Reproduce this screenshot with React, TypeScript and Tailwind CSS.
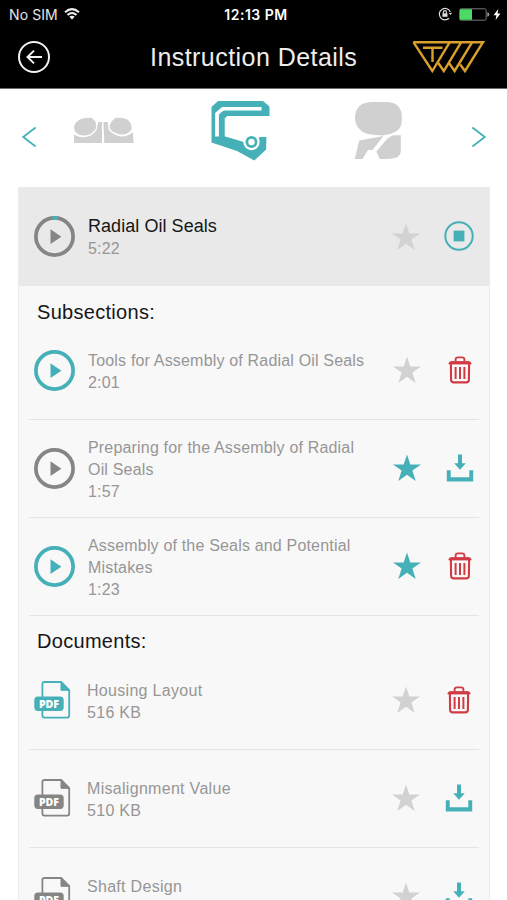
import type { ReactNode } from "react";
import clsx from "clsx";

type Action = "download" | "delete";

const SUBSECTIONS: {
  lines: string[];
  time: string;
  loaded: boolean;
  starred: boolean;
  action: Action;
}[] = [
  {
    lines: ["Tools for Assembly of Radial Oil Seals"],
    time: "2:01",
    loaded: true,
    starred: false,
    action: "delete",
  },
  {
    lines: ["Preparing for the Assembly of Radial", "Oil Seals"],
    time: "1:57",
    loaded: false,
    starred: true,
    action: "download",
  },
  {
    lines: ["Assembly of the Seals and Potential", "Mistakes"],
    time: "1:23",
    loaded: true,
    starred: true,
    action: "delete",
  },
];

const DOCUMENTS: {
  name: string;
  size?: string;
  loaded: boolean;
  action: Action;
}[] = [
  { name: "Housing Layout", size: "516 KB", loaded: true, action: "delete" },
  { name: "Misalignment Value", size: "510 KB", loaded: false, action: "download" },
  { name: "Shaft Design", loaded: false, action: "download" },
];

function Star({ active }: { active?: boolean }) {
  return (
    <svg
      width="28"
      height="28"
      viewBox="0 0 28 28"
      className={clsx("shrink-0", active ? "fill-[#46b0b8]" : "fill-[#d2d2d2]")}
    >
      <path d="M14 0.5 17.3 10.4H28L19.4 16.6 22.7 27 14 20.7 5.3 27 8.6 16.6 0 10.4H10.7Z" />
    </svg>
  );
}

function PlayButton({ loaded, progress }: { loaded?: boolean; progress?: boolean }) {
  return (
    <svg
      width="41"
      height="41"
      viewBox="0 0 41 41"
      className={clsx("shrink-0", loaded ? "text-[#46b0b8]" : "text-[#858585]")}
    >
      <circle cx="20.5" cy="20.5" r="18.6" fill="none" stroke="currentColor" strokeWidth="3.7" />
      {progress && (
        <path d="M18.4 2A18.6 18.6 0 0 1 24 2.2" fill="none" stroke="#46b0b8" strokeWidth="3.7" />
      )}
      <path d="M16.5 13.3V28L27.4 20.7Z" fill="currentColor" />
    </svg>
  );
}

function ActionIcon({ type }: { type: Action }) {
  if (type === "delete") {
    return (
      <svg width="28" height="28" viewBox="0 0 28 28" fill="none" stroke="#d13a43" className="shrink-0">
        <path d="M9.6 5.5V3.6Q9.6 1.4 12 1.4H16Q18.4 1.4 18.4 3.6V5.5" strokeWidth="1.9" />
        <path d="M2.8 8Q3 5.5 5.2 5.5H22.8Q25 5.5 25.2 8Z" fill="#d13a43" strokeWidth="0.8" />
        <path d="M4.9 8 5.1 24Q5.2 26.4 7.8 26.4H20.2Q22.8 26.4 22.9 24L23.1 8" strokeWidth="2.1" />
        <path d="M9.6 11V23M14 11V23M18.4 11V23" strokeWidth="2" />
      </svg>
    );
  }
  return (
    <svg width="28" height="28" viewBox="0 0 28 28" fill="#46b0b8" className="shrink-0">
      <path d="M12 0.5H16V9.3H19.8L14 15.8 8.2 9.3H12Z" />
      <path d="M0.8 16.3H4.7V23.3H23.3V16.3H27.2V27.4H0.8Z" />
    </svg>
  );
}

function PdfIcon({ loaded }: { loaded?: boolean }) {
  return (
    <svg
      width="37"
      height="38"
      viewBox="0 0 37 38"
      className={clsx("shrink-0", loaded ? "text-[#46b0b8]" : "text-[#858585]")}
    >
      <path
        d="M8.4 16V3Q8.4 1 10.4 1H27.2L35.2 9V34.6Q35.2 36.6 33.2 36.6H10.4Q8.4 36.6 8.4 34.6V29"
        fill="none"
        stroke="currentColor"
        strokeWidth="1.8"
      />
      <path d="M27 1V9.3H35.5Z" fill="currentColor" stroke="currentColor" />
      <rect x="0.3" y="15.5" width="29.4" height="14.4" rx="3.6" fill="currentColor" />
      <text
        x="15"
        y="26.6"
        textAnchor="middle"
        textLength="20"
        fontSize="10.6"
        fontWeight="800"
        fill="#fff"
        className="font-['Open_Sans',sans-serif]"
      >
        PDF
      </text>
    </svg>
  );
}

function Row({ children, last }: { children: ReactNode; last?: boolean }) {
  return (
    <div
      className={clsx(
        "mx-2.5 flex h-[98px] shrink-0 items-center px-[5px] pb-[2px] text-[#969696]",
        !last && "border-b-[1.5px] border-[#e4e4e4]",
      )}
    >
      {children}
    </div>
  );
}

function StatusBar() {
  return (
    <div className="flex h-7 items-center justify-between pl-[9px] pr-[6px] font-['Inter',sans-serif] text-[14px] text-[#e4e4e4]">
      <div className="flex w-[150px] items-center gap-[6px]">
        <span className="tracking-[0.1px]">No SIM</span>
        <svg width="16" height="12" viewBox="0 0 16 12" fill="none" stroke="#eee" strokeWidth="2">
          <path d="M1 4.3Q8-2 15 4.3M3.5 7Q8 2.9 12.5 7" />
          <path d="M8 11.5 5.3 8.8Q8 6.5 10.7 8.8Z" fill="#eee" stroke="none" />
        </svg>
      </div>
      <span className="text-[14px] font-semibold tracking-[0.5px] text-white">12:13 PM</span>
      <div className="flex w-[148px] items-center justify-end">
        <svg width="14" height="14" viewBox="0 0 14 14" fill="none" stroke="#ddd" strokeWidth="1.2">
          <path d="M12.3 5A5.7 5.7 0 1 0 11 11.2" />
          <path d="M10.8 6.3 12.8 8 13.9 5.7Z" fill="#ddd" stroke="none" />
          <path d="M5.4 6.5V5Q5.4 3.6 6.9 3.6 8.4 3.6 8.4 5V6.5" />
          <path d="M4.4 6.3H9.5V9.8H4.4Z" fill="#ddd" stroke="none" />
        </svg>
        <svg width="31" height="13" viewBox="0 0 31 13" className="ml-[7px]">
          <rect x="0.6" y="0.8" width="26.6" height="11.4" rx="1.6" fill="none" stroke="#777" />
          <rect x="1" y="1.2" width="12" height="10.6" fill="#4cd964" />
          <path d="M28.3 4.3Q30.3 4.5 30.3 6.5T28.3 8.7Z" fill="#999" />
        </svg>
        <svg width="8" height="11" viewBox="0 0 8 11" className="ml-[3px]">
          <path d="M5.3 0 0.5 6.2H3.4L2.6 11 7.5 4.6H4.6Z" fill="#fff" />
        </svg>
      </div>
    </div>
  );
}

function BrandLogo() {
  return (
    <svg
      width="76"
      height="34"
      viewBox="0 0 76 34"
      fill="none"
      stroke="#d9a02c"
      strokeWidth="2.4"
      className="ml-auto"
    >
      <path d="M2.4 2.2H72L54 31 49.2 24.5" />
      <path d="M2.4 2.2 21.3 31 38.8 2.2" />
      <path d="M27.3 23 32.8 31 50.2 2.2M38 23 43.6 31 61.2 2.2" />
      <path d="M12 7.8H31.5M21.5 7.8V22" />
    </svg>
  );
}

function CategoryBar() {
  return (
    <div className="flex h-[98px] shrink-0 items-start bg-white pl-[21px]">
      <svg width="16" height="22" viewBox="0 0 16 22" className="mt-[37px]" fill="none" stroke="#46b0b8" strokeWidth="1.8">
        <path d="M14.6 1.5 2.2 11 14.6 20.5" />
      </svg>
      <svg width="61" height="27" viewBox="0 0 61 27" className="ml-9 mt-[28px]" fill="#d0d0d0">
        <path d="M5.5 3.5Q8 1 13 1L18.5 0.8 22.5 4.5 23.3 9Q23.5 12 20.5 14.5 17 18.5 11 18.6 5.5 18.6 2.5 15 1 13 1 10 1.2 6.5 5.5 3.5Z" />
        <path d="M55.5 3.5Q53 1 48 1L42.5 0.8 38.5 4.5 36.5 9Q36.3 12 39.5 14.5 44 17.5 50 17.4 55.5 17 58.5 12.5 59.5 8 55.5 3.5Z" />
        <path d="M1 17.5Q5.5 20.8 12.5 20 20 19 23.7 12.5L25.2 5H29V26H1Z" />
        <path d="M30.4 5H34.8L35.5 12.5Q40 18.4 48 19.4 54.5 20 59.8 15L60.6 26H31.3Z" />
      </svg>
      <svg width="61" height="62" viewBox="0 0 61 62" className="ml-[76px] mt-[10px]">
        <path
          d="M1.5 8 8 2H53L59.5 7.5V17H18.5L15 19V37L34.5 43.3 44 34.5 50 38H56.2V50.5L44.3 61.5 27 52 1.5 43.5Z"
          fill="#46b0b8"
        />
        <path d="M7 37.5V14.8L12.8 9.9H51.5" fill="none" stroke="#fff" strokeWidth="3.8" />
        <path d="M14.5 37.3V19.5L17 17H60V38H50L43 44 35 43Z" fill="#fff" />
        <path d="M10 14.5 14 11.8H51.5V17H17L14.5 19.5V38H10Z" fill="#46b0b8" />
        <circle cx="41.5" cy="43" r="8.2" fill="#fff" />
        <path d="M50.3 38H56.2V45H49.7Z" fill="#46b0b8" />
        <circle cx="41.5" cy="43" r="4.6" fill="none" stroke="#46b0b8" strokeWidth="2.8" />
      </svg>
      <svg width="49" height="60" viewBox="0 0 49 60" className="ml-[83px] mt-[12px]" fill="#d0d0d0">
        <path d="M1 17Q1 9 6 4.5 10.5 1 18 1H32Q40 1 44 5 47.6 9 47.8 15V20Q47.5 28 41 31 36 34 29 34.4L19 33.8Q9 33 4.5 27 1 23 1 17Z" />
        <path d="M5.3 39.5 29.5 35 18.5 49H14L8.5 58H0.7Z" />
        <path d="M38.7 34.3H46.8V50Q46.5 54 42.5 56.5 38 58 25.8 58L22.3 50.5 33 38Z" />
      </svg>
      <svg width="16" height="22" viewBox="0 0 16 22" className="ml-[68px] mt-[37px]" fill="none" stroke="#46b0b8" strokeWidth="1.8">
        <path d="M1.4 1.5 13.8 11 1.4 20.5" />
      </svg>
    </div>
  );
}

export default function App() {
  return (
    <div className="flex h-[900px] w-full flex-col overflow-hidden bg-white font-['Liberation_Sans',Arial,sans-serif]">
      <header className="h-[89px] shrink-0 border-b border-[#6b6b6b] bg-black">
        <StatusBar />
        <div className="flex h-[58px] items-center pl-[17px] pr-[20px]">
          <svg width="34" height="34" viewBox="0 0 34 34" fill="none" stroke="#f2f2f2" strokeWidth="2">
            <circle cx="17" cy="17" r="15" />
            <path d="M25 17H10.5M17 10.6 10.5 17 17 23.4" />
          </svg>
          <h1 className="ml-[99px] whitespace-nowrap pt-0.5 text-[25px] tracking-[0.45px] text-[#ededed]">
            Instruction Details
          </h1>
          <BrandLogo />
        </div>
      </header>

      <CategoryBar />

      <main className="mx-[18px] mr-[17px] flex flex-1 flex-col overflow-hidden border-x border-[#ececec] bg-[#f8f8f8]">
        <section className="flex h-[99px] shrink-0 items-center bg-[#e9e9e9] pl-[15px] pr-[15px]">
          <PlayButton progress />
          <div className="ml-[13px] flex-1 pt-[2px]">
            <h2 className="text-[18px] leading-[23px] tracking-[0.05px] text-[#161616]">Radial Oil Seals</h2>
            <p className="text-[16px] leading-[22px] tracking-[0.2px] text-[#969696]">5:22</p>
          </div>
          <Star />
          <svg width="30" height="30" viewBox="0 0 30 30" className="ml-[24px] mb-[2px]">
            <circle cx="15" cy="15" r="13.7" fill="none" stroke="#46b0b8" strokeWidth="2" />
            <rect x="9.6" y="9.6" width="10.8" height="10.8" fill="#46b0b8" />
          </svg>
        </section>

        <h3 className="h-[36px] shrink-0 pl-[18px] pt-3 text-[20px] leading-7 tracking-[0.3px] text-[#161616]">
          Subsections:
        </h3>
        {SUBSECTIONS.map((item) => (
          <Row key={item.time}>
            <div className="pt-px">
              <PlayButton loaded={item.loaded} />
            </div>
            <div className="ml-[13px] flex-1 whitespace-nowrap pt-1 text-[16px] leading-[22px] tracking-[0.18px]">
              {item.lines.map((line) => (
                <p key={line}>{line}</p>
              ))}
              <p>{item.time}</p>
            </div>
            <Star active={item.starred} />
            <div className="ml-[25px]">
              <ActionIcon type={item.action} />
            </div>
          </Row>
        ))}

        <h3 className="h-[36px] shrink-0 pl-[18px] pt-[11px] text-[20px] leading-7 tracking-[0.3px] text-[#161616]">
          Documents:
        </h3>
        {DOCUMENTS.map((doc, i) => (
          <Row key={doc.name} last={i === DOCUMENTS.length - 1}>
            <PdfIcon loaded={doc.loaded} />
            <div className="ml-4 h-12 flex-1 pt-1 text-[16px] leading-[22px] tracking-[0.3px]">
              <p>{doc.name}</p>
              {doc.size && <p>{doc.size}</p>}
            </div>
            <Star />
            <div className="ml-[25px] mr-px">
              <ActionIcon type={doc.action} />
            </div>
          </Row>
        ))}
      </main>
    </div>
  );
}
